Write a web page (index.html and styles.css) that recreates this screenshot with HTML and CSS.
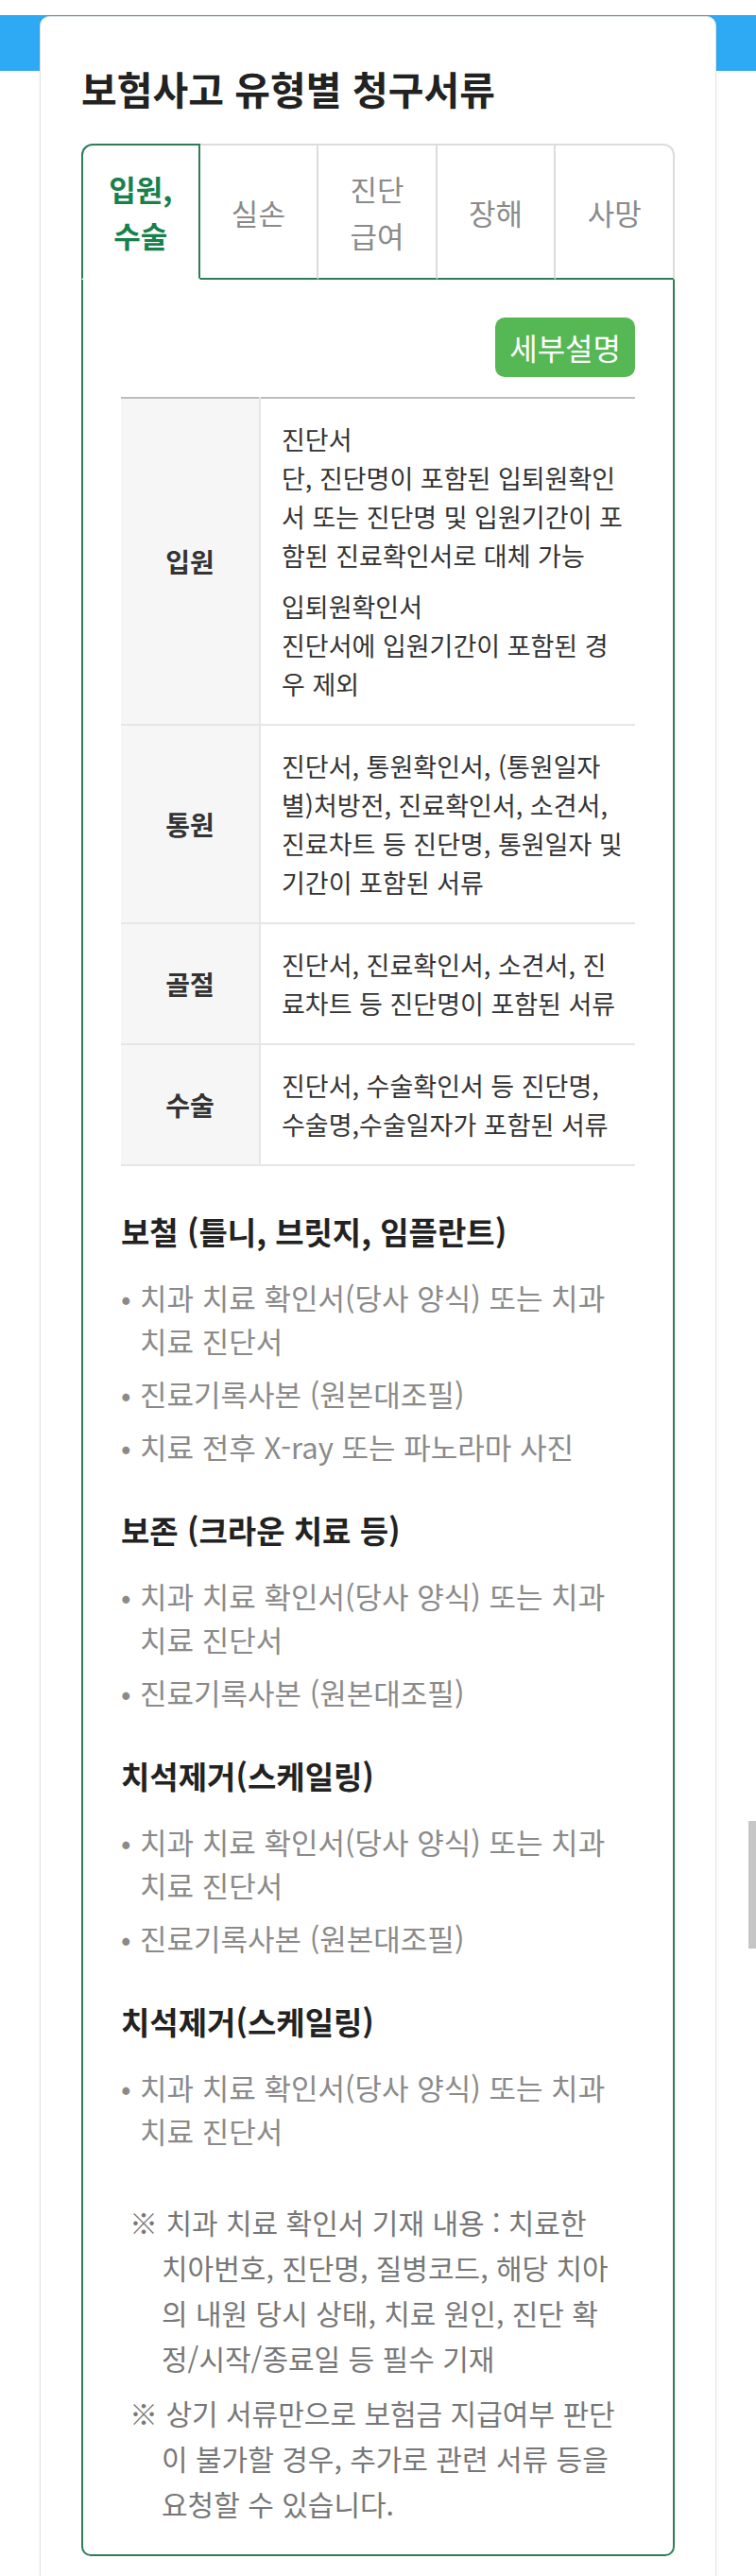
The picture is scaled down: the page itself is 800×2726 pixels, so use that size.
FILE: index.html
```html
<!DOCTYPE html>
<html lang="ko">
<head>
<meta charset="utf-8">
<title>보험사고 유형별 청구서류</title>
<link rel="stylesheet" href="styles.css">
</head>
<body>
<div class="page">
  <div class="card">
    <h2 class="title">보험사고 유형별 청구서류</h2>
    <div class="tabs">
      <div class="tab active">입원,<br>수술</div>
      <div class="tab">실손</div>
      <div class="tab">진단<br>급여</div>
      <div class="tab">장해</div>
      <div class="tab">사망</div>
    </div>
    <div class="panel">
      <div class="btn-row"><span class="btn">세부설명</span></div>
      <table class="docs">
        <tr>
          <th>입원</th>
          <td>
            <p>진단서<br>단, 진단명이 포함된 입퇴원확인<br>서 또는 진단명 및 입원기간이 포<br>함된 진료확인서로 대체 가능</p>
            <p>입퇴원확인서<br>진단서에 입원기간이 포함된 경<br>우 제외</p>
          </td>
        </tr>
        <tr>
          <th>통원</th>
          <td><p>진단서, 통원확인서, (통원일자<br>별)처방전, 진료확인서, 소견서,<br>진료차트 등 진단명, 통원일자 및<br>기간이 포함된 서류</p></td>
        </tr>
        <tr>
          <th>골절</th>
          <td><p>진단서, 진료확인서, 소견서, 진<br>료차트 등 진단명이 포함된 서류</p></td>
        </tr>
        <tr>
          <th>수술</th>
          <td><p>진단서, 수술확인서 등 진단명,<br>수술명,수술일자가 포함된 서류</p></td>
        </tr>
      </table>

      <section class="dental first">
        <h3>보철 (틀니, 브릿지, 임플란트)</h3>
        <ul>
          <li><span>치과 치료 확인서(당사 양식) 또는 치과<br>치료 진단서</span></li>
          <li><span>진료기록사본 (원본대조필)</span></li>
          <li><span>치료 전후 X-ray 또는 파노라마 사진</span></li>
        </ul>
      </section>

      <section class="dental">
        <h3>보존 (크라운 치료 등)</h3>
        <ul>
          <li><span>치과 치료 확인서(당사 양식) 또는 치과<br>치료 진단서</span></li>
          <li><span>진료기록사본 (원본대조필)</span></li>
        </ul>
      </section>

      <section class="dental">
        <h3>치석제거(스케일링)</h3>
        <ul>
          <li><span>치과 치료 확인서(당사 양식) 또는 치과<br>치료 진단서</span></li>
          <li><span>진료기록사본 (원본대조필)</span></li>
        </ul>
      </section>

      <section class="dental">
        <h3>치석제거(스케일링)</h3>
        <ul>
          <li><span>치과 치료 확인서(당사 양식) 또는 치과<br>치료 진단서</span></li>
        </ul>
      </section>

      <div class="notes">
        <p>※ 치과 치료 확인서 기재 내용 : 치료한<br>치아번호, 진단명, 질병코드, 해당 치아<br>의 내원 당시 상태, 치료 원인, 진단 확<br>정/시작/종료일 등 필수 기재</p>
        <p>※ 상기 서류만으로 보험금 지급여부 판단<br>이 불가할 경우, 추가로 관련 서류 등을<br>요청할 수 있습니다.</p>
      </div>
    </div>
  </div>
</div>
<div class="scroll-thumb"></div>
</body>
</html>
```
FILE: styles.css
```css
html, body {
  margin: 0;
  padding: 0;
  background: #fff;
}

body {
  font-family: "Noto Sans CJK KR", "Noto Sans", Roboto, sans-serif;
  color: #333;
}

.page {
  background: linear-gradient(#fff 0, #fff 16px, #2ea9f4 16px, #2ea9f4 75px, #fff 75px);
  padding: 17px 42px 0;
}

.card {
  background: #fff;
  border: 1px solid #e3e3e3;
  border-radius: 10px;
  box-shadow: 0 0 4px rgba(0, 0, 0, 0.05);
  padding: 0 43px 80px;
}

.title {
  margin: 49px 0 0;
  font-size: 41px;
  line-height: 52px;
  font-weight: 700;
  color: #222;
}

.tabs {
  margin-top: 33px;
  display: grid;
  grid-template-columns: repeat(5, 1fr);
  height: 144px;
}

.tab {
  box-sizing: border-box;
  display: flex;
  align-items: center;
  justify-content: center;
  text-align: center;
  font-size: 31px;
  line-height: 49px;
  color: #8a8a8a;
  border-top: 2px solid #dcdcdc;
  border-right: 2px solid #dcdcdc;
  border-bottom: 2px solid #2e7d57;
}

.tab.active {
  border: 2px solid #2e7d57;
  border-bottom-color: #fff;
  border-radius: 12px 0 0 0;
  color: #18804b;
  font-weight: 700;
}

.tab:last-child {
  border-top-right-radius: 12px;
}

.panel {
  border: 2px solid #2e7d57;
  border-top: none;
  border-radius: 0 0 10px 10px;
  padding: 40px 40px 30px;
}

.btn-row {
  text-align: right;
  line-height: 0;
}

.btn {
  display: inline-block;
  background: #56b855;
  color: #fff;
  font-size: 32px;
  line-height: 43px;
  padding: 10px 15px;
  border-radius: 10px;
}

.docs {
  margin-top: 21px;
  width: 100%;
  border-collapse: collapse;
  border-top: 2px solid #bdbdbd;
}

.docs th {
  width: 146px;
  background: #f6f6f6;
  font-size: 28px;
  font-weight: 700;
  color: #333;
  border-bottom: 2px solid #e6e6e6;
  border-right: 2px solid #e6e6e6;
  padding: 0;
}

.docs td {
  padding: 22px 2px 22px 22px;
  font-size: 27px;
  line-height: 41px;
  color: #333;
  border-bottom: 2px solid #e6e6e6;
  white-space: nowrap;
}

.docs td p {
  margin: 0;
}

.docs td p + p {
  margin-top: 13px;
}

.dental h3 {
  margin: 42px 0 0;
  font-size: 33px;
  line-height: 46px;
  font-weight: 700;
  color: #222;
}

.dental.first h3 {
  margin-top: 46px;
}

.dental ul {
  list-style: none;
  margin: 24px 0 0;
  padding: 0;
}

.dental li {
  display: flex;
  font-size: 31px;
  line-height: 46px;
  color: #8a8a8a;
  white-space: nowrap;
}

.dental li + li {
  margin-top: 10px;
}

.dental li::before {
  content: "•";
  flex: none;
  width: 20px;
  font-size: 31px;
  color: #8a8a8a;
}

.notes {
  margin-top: 49px;
  margin-left: 14px;
}

.notes p {
  margin: 0;
  padding-left: 29px;
  text-indent: -34px;
  font-size: 30px;
  line-height: 48px;
  color: #777;
  white-space: nowrap;
}

.notes p + p {
  margin-top: 10px;
}

.scroll-thumb {
  position: fixed;
  right: 0;
  top: 1927px;
  width: 8px;
  height: 135px;
  background: #c6c6c6;
}
```
